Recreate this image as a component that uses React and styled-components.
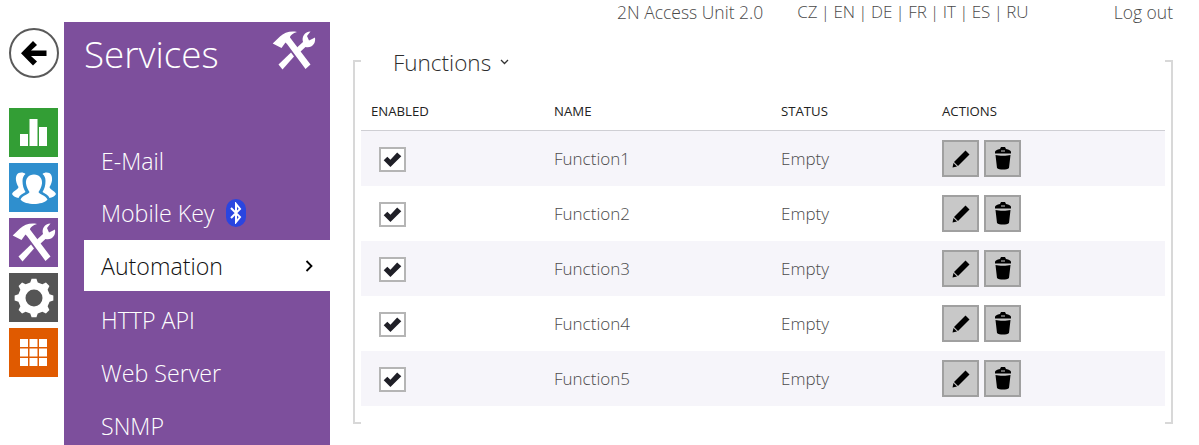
import React from "react";
import styled, { createGlobalStyle } from "styled-components";

const GlobalStyle = createGlobalStyle`
  html, body {
    margin: 0;
    padding: 0;
    background: #fff;
    font-family: "Open Sans", "Liberation Sans", sans-serif;
    font-weight: 300;
  }
`;

const languages = ["CZ", "EN", "DE", "FR", "IT", "ES", "RU"];
const menuItems = ["E-Mail", "Mobile Key", "Automation", "HTTP API", "Web Server", "SNMP"];
const rows = ["Function1", "Function2", "Function3", "Function4", "Function5"];

// hammer and wrench crossed, used in the panel title and the side tile
function ToolsIcon({ size }) {
  return (
    <svg width={size} height={(size * 39) / 44} viewBox="0 0 44 39" fill="#fff">
      <path d="M0.700 12.500 L8 5.500 C12 1.500 19 -0.500 25 1 C21 2 18 4.500 18 6.500 L19.500 8.500 L38.500 33.500 L33.500 38 L15 13 L13.500 11.500 L9.500 17 Z" />
      <path d="M6.500 33.500 L19 21.500 L22 25.500 L10.500 38.500 Z" />
      <path d="M25 16.500 L31 11 C29.500 6 32.500 0.500 38.500 0.500 L35 5 L37 9.500 L43 6.500 C44 12.500 40 17.500 33.500 16 L28 21 Z" />
    </svg>
  );
}

function gearPath() {
  const points = [];
  const teeth = 8;
  for (let i = 0; i < teeth; i++) {
    const a = (i / teeth) * Math.PI * 2 - Math.PI / 2;
    const step = (Math.PI * 2) / teeth;
    [
      [a - step * 0.3, 16],
      [a - step * 0.16, 19.500],
      [a + step * 0.16, 19.500],
      [a + step * 0.3, 16],
    ].forEach(([t, r]) => {
      points.push(`${(20 + r * Math.cos(t)).toFixed(2)} ${(20 + r * Math.sin(t)).toFixed(2)}`);
    });
  }
  return `M${points.join(" L")} Z M20 11.500 A8.500 8.500 0 1 0 20 28.500 A8.500 8.500 0 1 0 20 11.500 Z`;
}

function TileIcon({ kind }) {
  if (kind === "chart") {
    return (
      <svg width="27" height="27" viewBox="0 0 27 27" fill="#fff">
        <rect x="0" y="15" width="8" height="12" />
        <rect x="9.500" y="0" width="8" height="27" />
        <rect x="19" y="8" width="8" height="19" />
      </svg>
    );
  }
  if (kind === "users") {
    return (
      <svg width="44" height="32" viewBox="0 0 44 32" fill="#fff">
        <path d="M9.500 0.500 C5 0.500 3.500 4 4 8.500 C4.500 11.500 5.500 13.500 6.500 15 C6 17.500 1.500 18.500 0 22 C1 24.500 4 25.500 6.500 26 C7.500 23 11 21.500 13.500 20 C11.500 17 10.500 13 10.500 9 C10.500 6 11.500 3.500 13.500 2 C12.500 1 11 0.500 9.500 0.500 Z" />
        <path d="M34.500 0.500 C39 0.500 40.500 4 40 8.500 C39.500 11.500 38.500 13.500 37.500 15 C38 17.500 42.500 18.500 44 22 C43 24.500 40 25.500 37.500 26 C36.500 23 33 21.500 30.500 20 C32.500 17 33.500 13 33.500 9 C33.500 6 32.500 3.500 30.500 2 C31.500 1 33 0.500 34.500 0.500 Z" />
        <path d="M22 2.500 C16.500 2.500 13.500 6.500 14 11.500 C14.500 15 16 18 17.500 20 C17 22.500 10.500 23 8.500 27.500 C10.500 30.500 17 32 22 32 C27 32 33.500 30.500 35.500 27.500 C33.500 23 27 22.500 26.500 20 C28 18 29.500 15 30 11.500 C30.500 6.500 27.500 2.500 22 2.500 Z" />
      </svg>
    );
  }
  if (kind === "tools") return <ToolsIcon size={44} />;
  if (kind === "gear") {
    return (
      <svg width="40" height="40" viewBox="0 0 40 40" fill="#fff">
        <path fillRule="evenodd" d={gearPath()} />
      </svg>
    );
  }
  return (
    <svg width="27" height="27" viewBox="0 0 27 27" fill="#fff">
      {[0, 9.500, 19].map((y) =>
        [0, 9.500, 19].map((x) => <rect key={`${x}-${y}`} x={x} y={y} width="8" height="8" />)
      )}
    </svg>
  );
}

const tiles = [
  { kind: "chart", color: "#339e35" },
  { kind: "users", color: "#2f8fce" },
  { kind: "tools", color: "#7d4f9c" },
  { kind: "gear", color: "#555555" },
  { kind: "grid", color: "#e05a00" },
];

function App() {
  return (
    <>
      <GlobalStyle />
      <Page>
        <SideRail>
          <BackButton>
            <svg width="26" height="25" viewBox="0 0 26 25">
              <path d="M12 0 L16 4 L10 9.500 H25.500 V15 H10 L16 20.500 L12 24.500 L0 12.200 Z" fill="#000" />
            </svg>
          </BackButton>
          <TileList>
            {tiles.map((tile) => (
              <Tile key={tile.kind} $color={tile.color}>
                <TileIcon kind={tile.kind} />
              </Tile>
            ))}
          </TileList>
        </SideRail>

        <Panel>
          <PanelHead>
            <PanelTitle>Services</PanelTitle>
            <ToolsIcon size={44} />
          </PanelHead>
          <Menu>
            {menuItems.map((item) => (
              <MenuItem key={item} $active={item === "Automation"}>
                <span>{item}</span>
                {item === "Mobile Key" && (
                  <Bluetooth>
                    <svg width="12" height="22" viewBox="0 0 12 22" fill="none" stroke="#fff" strokeWidth="2">
                      <path d="M1 6 L10 15 L6 20 V2 L10 7 L1 16" />
                    </svg>
                  </Bluetooth>
                )}
                {item === "Automation" && (
                  <svg width="8" height="12" viewBox="0 0 8 12" fill="none" stroke="#000" strokeWidth="1.800">
                    <path d="M1.500 1 L6.500 6 L1.500 11" />
                  </svg>
                )}
              </MenuItem>
            ))}
          </Menu>
        </Panel>

        <Content>
          <TopBar>
            <DeviceName>2N Access Unit 2.0</DeviceName>
            <Languages>
              {languages.map((lang, i) => (
                <span key={lang}>{i > 0 && " | "}{lang}</span>
              ))}
            </Languages>
            <LogOut>Log out</LogOut>
          </TopBar>

          <Frame>
            <FrameTitle>
              Functions
              <svg width="9" height="6" viewBox="0 0 9 6" fill="none" stroke="#333" strokeWidth="1.300">
                <path d="M1 1 L4.500 4.500 L8 1" />
              </svg>
            </FrameTitle>
            <Table>
              <HeaderRow>
                <HeadCell>Enabled</HeadCell>
                <HeadCell>Name</HeadCell>
                <HeadCell>Status</HeadCell>
                <HeadCell>Actions</HeadCell>
              </HeaderRow>
              {rows.map((name, i) => (
                <Row key={name} $shaded={i % 2 === 0}>
                  <CheckBox>
                    <svg width="19" height="15" viewBox="0 0 18 14.500">
                      <path d="M0.500 8 L4 4.500 L7 7.500 L13.500 0.500 L17.500 4 L7 14.500 Z" fill="#1f1f27" />
                    </svg>
                  </CheckBox>
                  <Cell>{name}</Cell>
                  <Cell>Empty</Cell>
                  <Actions>
                    <ActionButton>
                      <svg width="18" height="18" viewBox="0 0 18 18" fill="#000">
                        <path d="M13.500 0.500 L17.500 4.500 L6 16 L2 12 Z" />
                        <path d="M1.500 13 L5 16.500 L0.500 17.500 Z" />
                      </svg>
                    </ActionButton>
                    <ActionButton>
                      <svg width="18" height="23" viewBox="0 0 18 23" fill="#000">
                        <path fillRule="evenodd" d="M7 0 H11 L12 2 C15 2.500 17 3.500 17 5 V6.500 H1 V5 C1 3.500 3 2.500 6 2 Z M7 3.500 H11 V4.500 H7 Z" />
                        <path d="M1.500 8 C5 9 13 9 16.500 8 L15 21 C13 23 5 23 3 21 Z" />
                      </svg>
                    </ActionButton>
                  </Actions>
                </Row>
              ))}
            </Table>
          </Frame>
        </Content>
      </Page>
    </>
  );
}

export default App;

const Page = styled.div`
  display: flex;
  width: 1199px;
  height: 445px;
  overflow: hidden;
  padding-left: 9px;
  box-sizing: border-box;
`;

const SideRail = styled.div`
  display: flex;
  flex-direction: column;
  width: 49px;
  margin-right: 6px;
  padding-top: 28px;
`;

const BackButton = styled.div`
  display: flex;
  align-items: center;
  justify-content: center;
  box-sizing: border-box;
  width: 50px;
  height: 50px;
  border: 2px solid #5a5a5a;
  border-radius: 50%;
  background: #fff;
`;

const TileList = styled.div`
  display: flex;
  flex-direction: column;
  gap: 6px;
  margin-top: 30px;
`;

const Tile = styled.div`
  display: flex;
  align-items: center;
  justify-content: center;
  width: 49px;
  height: 49px;
  background: ${(p) => p.$color};
`;

const Panel = styled.div`
  width: 266px;
  height: 423px;
  margin-top: 22px;
  padding-left: 20px;
  box-sizing: border-box;
  background: #7d4f9c;
  color: #fff;
`;

const PanelHead = styled.div`
  display: flex;
  align-items: center;
  justify-content: space-between;
  height: 64px;
  padding-right: 14px;
  padding-bottom: 7px;
  box-sizing: border-box;
`;

const PanelTitle = styled.div`
  margin-top: 7px;
  font-size: 36.800px;
  line-height: 64px;
`;

const Menu = styled.div`
  display: flex;
  flex-direction: column;
  margin-top: 48px;
`;

const MenuItem = styled.div`
  display: flex;
  align-items: center;
  justify-content: ${(p) => (p.$active ? "space-between" : "flex-start")};
  gap: 11px;
  box-sizing: border-box;
  height: ${(p) => (p.$active ? 51 : 53)}px;
  margin-bottom: ${(p) => (p.$active ? 2 : 0)}px;
  padding: ${(p) => (p.$active ? "1px" : "0")} 17px 0;
  font-size: 23.200px;
  background: ${(p) => (p.$active ? "#fff" : "transparent")};
  color: ${(p) => (p.$active ? "#111" : "#fff")};

  &:nth-child(2) {
    padding-bottom: 2px;
  }
`;

const Bluetooth = styled.div`
  display: flex;
  align-items: center;
  justify-content: center;
  width: 20px;
  height: 28px;
  border-radius: 10px;
  background: #2a45e0;
`;

const Content = styled.div`
  display: flex;
  flex-direction: column;
  width: 843px;
  padding-left: 23px;
  box-sizing: border-box;
`;

const TopBar = styled.div`
  display: flex;
  align-items: center;
  height: 23px;
  font-size: 17.500px;
  color: #4a4a4a;
`;

const DeviceName = styled.div`
  margin-left: 264px;
`;

const Languages = styled.div`
  margin-left: 34px;
  font-size: 17px;
  word-spacing: -1.100px;
  white-space: pre;
`;

const LogOut = styled.div`
  margin-left: auto;
`;

const Frame = styled.div`
  position: relative;
  box-sizing: border-box;
  width: 820px;
  height: 364px;
  margin-top: 37px;
  padding: 0 6px;
  border-left: 2px solid #d8d8d8;
  border-right: 2px solid #d8d8d8;

  &::before,
  &::after {
    content: "";
    position: absolute;
    left: 0;
    right: 0;
    height: 2px;
    background: linear-gradient(to right, #d8d8d8 6px, transparent 6px, transparent calc(100% - 6px), #d8d8d8 calc(100% - 6px));
  }
  &::before {
    top: 0;
  }
  &::after {
    bottom: 0;
  }
`;

const FrameTitle = styled.div`
  display: flex;
  align-items: center;
  gap: 9px;
  margin-top: -14px;
  margin-bottom: 14px;
  height: 32px;
  margin-left: 32px;
  font-size: 22.500px;
  color: #2d2d2d;
`;

const Table = styled.div`
  margin-top: -2px;
`;

const HeaderRow = styled.div`
  display: grid;
  grid-template-columns: 183px 227px 161px 1fr;
  align-items: center;
  box-sizing: border-box;
  height: 41px;
  padding-left: 10px;
  padding-top: 2px;
  border-bottom: 1px solid #cfcfd4;
`;

const HeadCell = styled.div`
  font-size: 13.200px;
  font-weight: 400;
  text-transform: uppercase;
  color: #222;
`;

const Row = styled.div`
  display: grid;
  grid-template-columns: 193px 227px 161px 1fr;
  align-items: center;
  height: 55px;
  background: ${(p) => (p.$shaded ? "#f6f5fa" : "#fff")};
`;

const Cell = styled.div`
  font-size: 17px;
  color: #4a4a4a;
`;

const CheckBox = styled.div`
  display: flex;
  align-items: center;
  justify-content: center;
  box-sizing: border-box;
  width: 27px;
  height: 25px;
  margin-left: 18px;
  margin-top: 2px;
  border: 2px solid #b5b5b5;
  background: #fff;
`;

const Actions = styled.div`
  display: flex;
  gap: 5px;
`;

const ActionButton = styled.div`
  display: flex;
  align-items: center;
  justify-content: center;
  box-sizing: border-box;
  width: 37px;
  height: 37px;
  border: 2px solid #a0a0a0;
  background: #c8c8c8;
`;
